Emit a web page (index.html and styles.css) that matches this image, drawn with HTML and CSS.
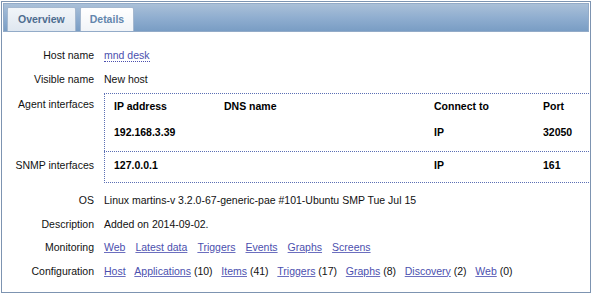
FILE: index.html
```html
<!DOCTYPE html>
<html lang="en">
<head>
    <meta charset="UTF-8">
    <title>Host overview</title>
    <link rel="stylesheet" href="styles.css">
</head>
<body>
    <div class="host-view">
        <div class="tab-strip">
            <a class="tab active">Overview</a>
            <a class="tab">Details</a>
        </div>
        <div class="details">
            <div class="label">Host name</div>
            <div class="value"><a class="link dotted">mnd desk</a></div>

            <div class="label">Visible name</div>
            <div class="value">New host</div>

            <div class="label iface-label agent">Agent interfaces</div>
            <div class="value iface agent">
                <table class="iface-table">
                    <tr class="head">
                        <td class="c-ip">IP address</td>
                        <td class="c-dns">DNS name</td>
                        <td class="c-conn">Connect to</td>
                        <td>Port</td>
                    </tr>
                    <tr class="data">
                        <td>192.168.3.39</td>
                        <td></td>
                        <td>IP</td>
                        <td>32050</td>
                    </tr>
                </table>
            </div>

            <div class="label iface-label snmp">SNMP interfaces</div>
            <div class="value iface snmp">
                <table class="iface-table">
                    <tr class="data">
                        <td class="c-ip">127.0.0.1</td>
                        <td class="c-dns"></td>
                        <td class="c-conn">IP</td>
                        <td>161</td>
                    </tr>
                </table>
            </div>

            <div class="label">OS</div>
            <div class="value">Linux martins-v 3.2.0-67-generic-pae #101-Ubuntu SMP Tue Jul 15</div>

            <div class="label">Description</div>
            <div class="value">Added on 2014-09-02.</div>

            <div class="label">Monitoring</div>
            <div class="value links">
                <a class="link">Web</a>
                <a class="link">Latest data</a>
                <a class="link">Triggers</a>
                <a class="link">Events</a>
                <a class="link">Graphs</a>
                <a class="link">Screens</a>
            </div>

            <div class="label">Configuration</div>
            <div class="value links config">
                <span><a class="link">Host</a></span>
                <span><a class="link">Applications</a> (10)</span>
                <span><a class="link">Items</a> (41)</span>
                <span><a class="link">Triggers</a> (17)</span>
                <span><a class="link">Graphs</a> (8)</span>
                <span><a class="link">Discovery</a> (2)</span>
                <span><a class="link">Web</a> (0)</span>
            </div>
        </div>
    </div>
</body>
</html>
```

FILE: styles.css
```css
body {
    margin: 0;
    background-color: #fff;
    font-family: "Liberation Sans", Arial, sans-serif;
    font-size: 10.5px;
    color: #111;
}

.host-view {
    margin: 1px 1px 0 1px;
    height: 292px;
    box-sizing: border-box;
    border: 1px solid #7d94b1;
    padding: 1px 1px 0 1px;
}

.tab-strip {
    height: 29px;
    box-sizing: border-box;
    border: 1px solid #93abc8;
    background: linear-gradient(#aac0d8, #90aed0 50%, #799dc4);
    display: flex;
    align-items: flex-end;
    padding-left: 3px;
    gap: 4px;
}

.tab {
    height: 24px;
    line-height: 23px;
    box-sizing: border-box;
    padding: 0 9px;
    border: 1px solid #a5b8cf;
    border-bottom: none;
    border-radius: 2px 2px 0 0;
    background: linear-gradient(#ffffff, #f1f4f8);
    color: #6386ad;
    font-weight: bold;
}

.tab.active {
    padding: 0 10px;
    background: linear-gradient(#f1f5f9, #dfe7f0);
    color: #4d6c8f;
}

.details {
    display: grid;
    grid-template-columns: 91px 1fr;
    column-gap: 10px;
    padding-top: 12px;
}

.label {
    text-align: right;
    padding: 5px 0;
    line-height: 13.5px;
}

.value {
    padding: 5px 0;
    line-height: 13.5px;
}

.link {
    color: #4b4fae;
    text-decoration: underline;
    text-decoration-color: #6c6fbf;
}

.link.dotted {
    text-decoration: none;
    border-bottom: 1px dotted #4b4fae;
}

.links {
    display: flex;
    gap: 10px;
}

.links.config {
    gap: 8.75px;
}

.iface-label.agent {
    padding: 7px 0 0;
}

.iface-label.snmp {
    padding: 8px 0 0;
}

.iface {
    padding: 0;
    border-left: 1px dotted #5b6fb4;
    border-top: 1px dotted #5b6fb4;
}

.iface.agent {
    margin-top: 2px;
    padding-bottom: 7px;
}

.iface.snmp {
    border-bottom: 1px dotted #5b6fb4;
    margin-bottom: 6px;
    padding-bottom: 10px;
}

.iface-table {
    border-collapse: collapse;
    width: 100%;
    font-weight: bold;
    color: #000;
}

.iface-table td {
    padding: 5px 10px 5px 9px;
    line-height: 14px;
    height: 14px;
}

.iface-table .data td {
    padding-top: 7px;
}

.iface.snmp .iface-table .data td {
    padding-top: 6px;
    padding-bottom: 0;
}

.c-ip {
    width: 91px;
}

.c-dns {
    width: 191px;
}

.c-conn {
    width: 90px;
}
```
